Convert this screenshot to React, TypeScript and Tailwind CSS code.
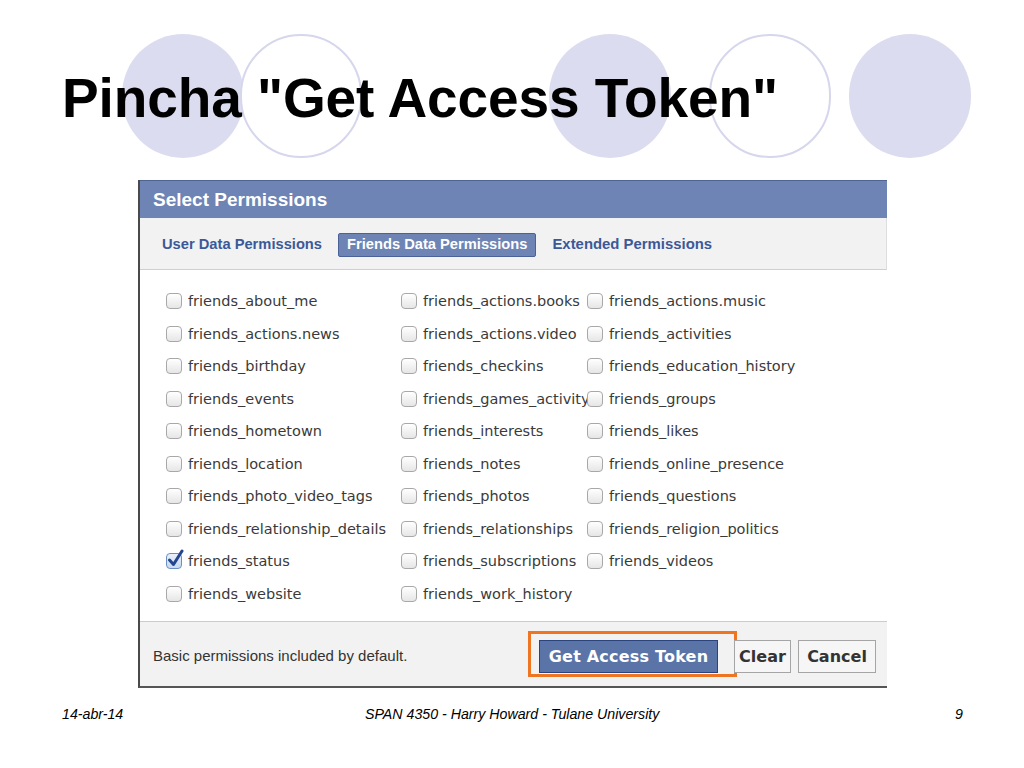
import React from "react";

const col1 = [
  "friends_about_me",
  "friends_actions.news",
  "friends_birthday",
  "friends_events",
  "friends_hometown",
  "friends_location",
  "friends_photo_video_tags",
  "friends_relationship_details",
  "friends_status",
  "friends_website",
];
const col2 = [
  "friends_actions.books",
  "friends_actions.video",
  "friends_checkins",
  "friends_games_activity",
  "friends_interests",
  "friends_notes",
  "friends_photos",
  "friends_relationships",
  "friends_subscriptions",
  "friends_work_history",
];
const col3 = [
  "friends_actions.music",
  "friends_activities",
  "friends_education_history",
  "friends_groups",
  "friends_likes",
  "friends_online_presence",
  "friends_questions",
  "friends_religion_politics",
  "friends_videos",
  "",
];

function Box({ checked }: { checked?: boolean }) {
  return (
    <span className="relative inline-block w-[16px] h-[16px] shrink-0">
      <span
        className={
          checked
            ? "absolute inset-0 rounded-[4px] border border-[#6b8fc4] bg-gradient-to-b from-[#e8f0fb] to-[#c9d9f0]"
            : "absolute inset-0 rounded-[4px] border border-[#a8a8a8] bg-gradient-to-b from-white to-[#e6e6e6]"
        }
      />
      {checked && (
        <svg
          className="absolute left-[1px] top-[-4px]"
          width="17"
          height="19"
          viewBox="0 0 17 19"
        >
          <path
            d="M2.5 11 L6.5 15.5 L15 2"
            fill="none"
            stroke="#23468f"
            strokeWidth="3"
            strokeLinecap="round"
            strokeLinejoin="round"
          />
        </svg>
      )}
    </span>
  );
}

function Item({ label, checked }: { label: string; checked?: boolean }) {
  if (!label) return <div />;
  return (
    <div className="flex items-center gap-[6px] whitespace-nowrap">
      <Box checked={checked} />
      <span className="text-[14.5px] text-[#3a3a3a] leading-none">{label}</span>
    </div>
  );
}

function Circle({ x, filled }: { x: string; filled: boolean }) {
  return (
    <div
      className={
        "absolute top-[34px] w-[122px] h-[124px] rounded-full " +
        x +
        (filled ? " bg-[#dcdcf0]" : " border-2 border-[#d6d6ec] bg-white")
      }
    />
  );
}

export default function App() {
  const rows = col1.map((_, i) => i);
  return (
    <div className="relative w-[1024px] h-[768px] bg-white overflow-hidden font-['Liberation_Sans',Arial,sans-serif]">
      <Circle x="left-[122px]" filled />
      <Circle x="left-[240px]" filled={false} />
      <Circle x="left-[549px]" filled />
      <Circle x="left-[709px]" filled={false} />
      <Circle x="left-[849px]" filled />

      <div className="relative pt-[70px] pl-[62px]">
        <h1 className="text-[55px] leading-[56px] font-bold text-black whitespace-nowrap tracking-[-0.1px]">
          Pincha "Get Access Token"
        </h1>
      </div>

      <div className="relative ml-[138px] mt-[54px] w-[749px] border-l-2 border-l-[#4a4a4a] border-b-2 border-b-[#555]">
        <div className="h-[38px] bg-[#6d84b4] border-t border-t-[#4e6494] flex items-center pl-[13px]">
          <span className="text-white font-bold text-[19px] leading-none">Select Permissions</span>
        </div>
        <div className="h-[52px] bg-[#f2f2f2] border-b border-b-[#cfcfcf] border-r border-r-[#dedede] flex items-center pl-[22px] pt-[2px] gap-[16px]">
          <span className="text-[#3b5998] font-bold text-[14.7px]">User Data Permissions</span>
          <span className="h-[24px] px-[8px] flex items-center bg-[#6d84b4] border border-[#4a6296] rounded-[2px] text-white font-bold text-[14.7px]">
            Friends Data Permissions
          </span>
          <span className="text-[#3b5998] font-bold text-[14.9px]">Extended Permissions</span>
        </div>
        <div className="bg-white pt-[15px] pb-[11px] pl-[26px] font-['DejaVu_Sans',sans-serif]">
          <div className="grid grid-cols-[235px_186px_1fr] auto-rows-[32.5px] items-center">
            {rows.map((i) => (
              <React.Fragment key={i}>
                <Item label={col1[i]} checked={col1[i] === "friends_status"} />
                <Item label={col2[i]} />
                <Item label={col3[i]} />
              </React.Fragment>
            ))}
          </div>
        </div>
        <div className="h-[65px] bg-[#f2f2f2] border-t border-t-[#cccccc] flex items-center pl-[13px] pr-[11px] pt-[5px]">
          <span className="text-[15px] text-[#333]">Basic permissions included by default.</span>
          <div className="ml-auto flex items-center font-['DejaVu_Sans',sans-serif]">
            <div className="relative">
              <span className="absolute left-[-11px] right-[-19px] top-[-9px] bottom-[-4px] border-[3px] border-[#f07522]" />
              <button className="relative h-[33px] w-[179px] bg-[#5b74a8] border border-[#29447e] text-white font-bold text-[16px] tracking-[0.2px]">
                Get Access Token
              </button>
            </div>
            <button className="relative ml-[16px] h-[33px] w-[57px] bg-[#f6f6f6] border border-[#a5a5a5] text-[#333] font-bold text-[16px]">
              Clear
            </button>
            <button className="ml-[7px] h-[33px] w-[78px] bg-[#f6f6f6] border border-[#a5a5a5] text-[#333] font-bold text-[16px]">
              Cancel
            </button>
          </div>
        </div>
      </div>

      <div className="relative mt-[16px] h-[16px] text-[14.2px] italic text-black">
        <span className="absolute left-[62px]">14-abr-14</span>
        <span className="absolute left-[365px]">SPAN 4350 - Harry Howard - Tulane University</span>
        <span className="absolute left-[955px]">9</span>
      </div>
    </div>
  );
}
